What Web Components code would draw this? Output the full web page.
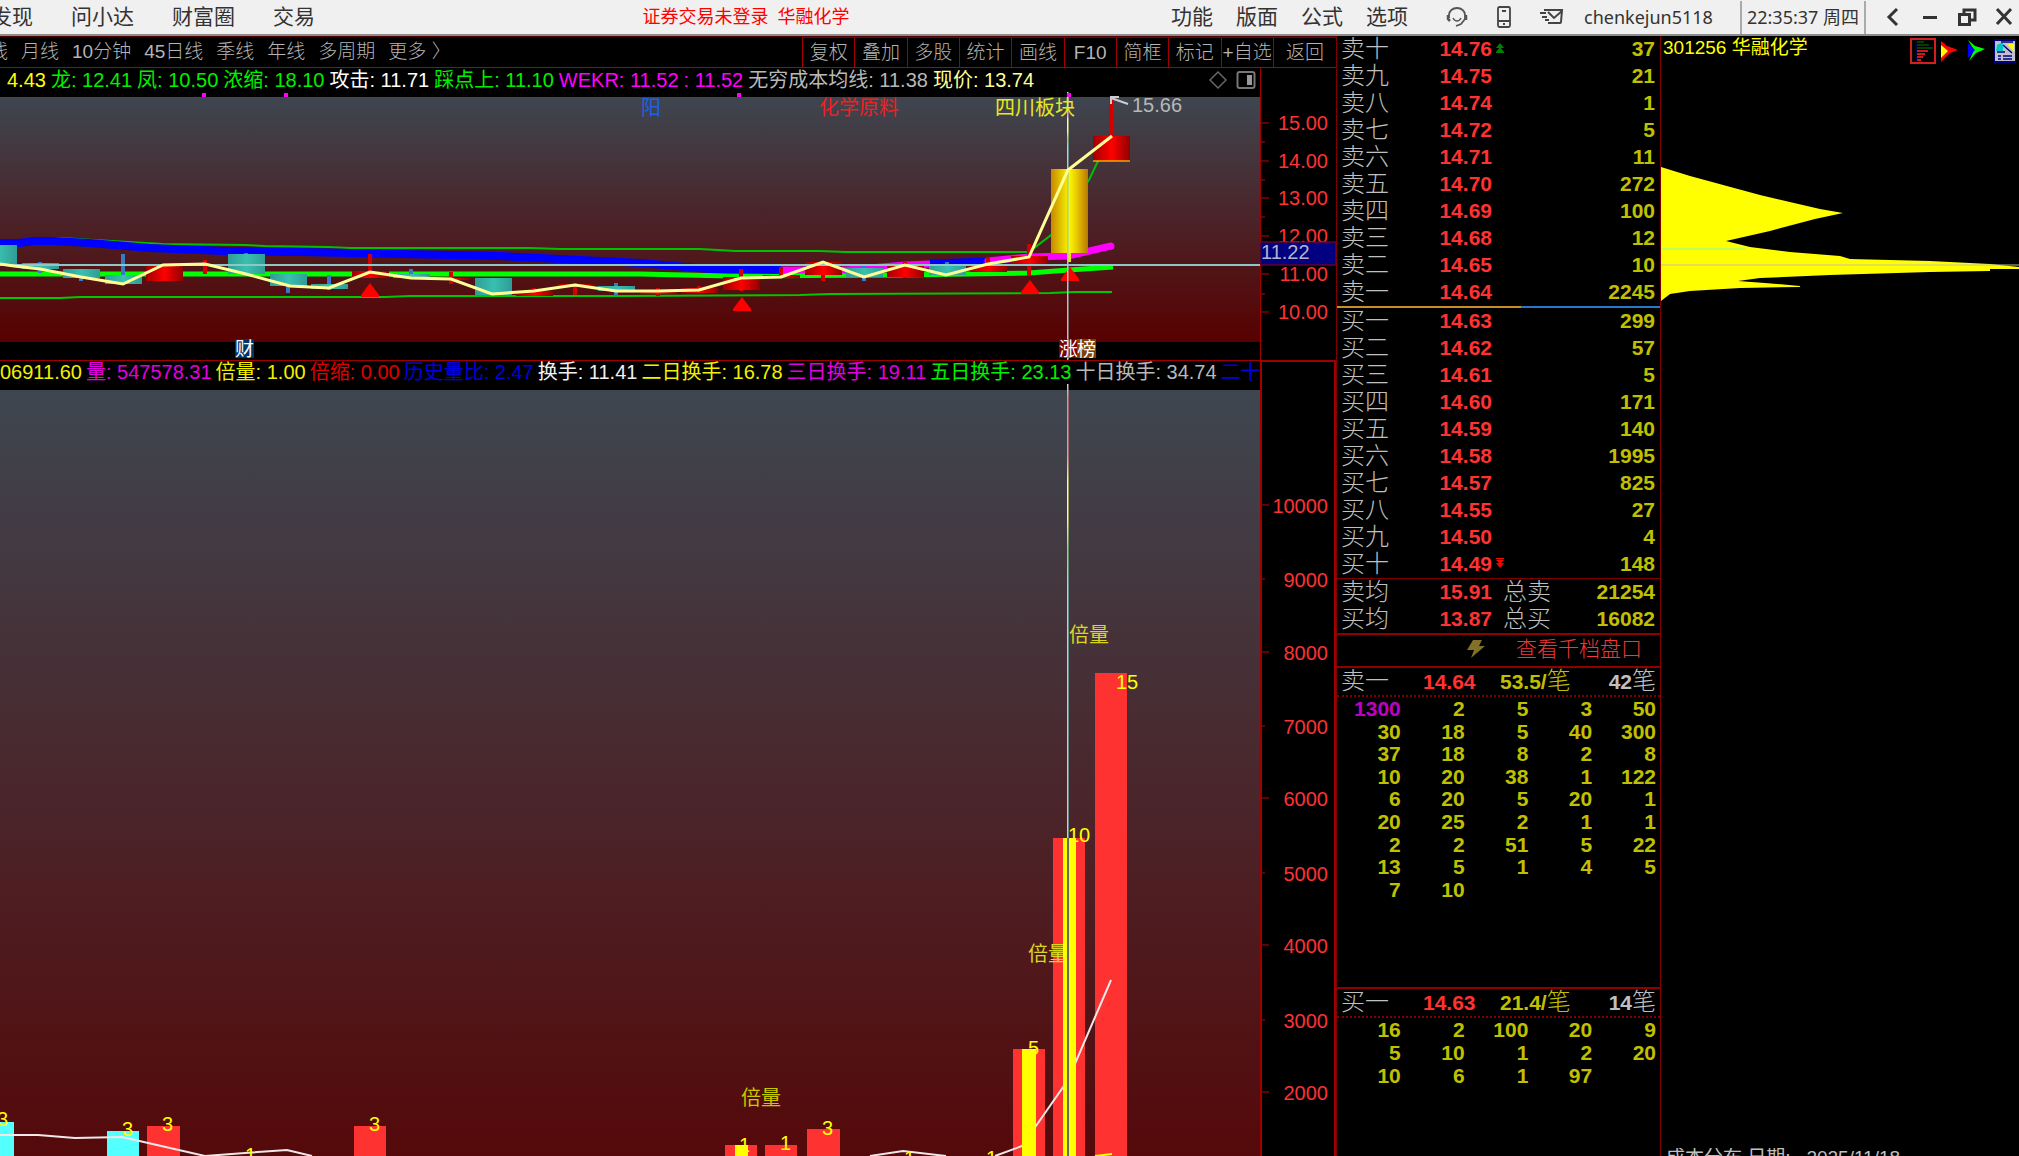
<!DOCTYPE html>
<html lang="zh-CN">
<head>
<meta charset="utf-8">
<title>301256 华融化学</title>
<style>
html,body{margin:0;height:100%;background:#000;overflow:hidden}
body{font-family:"Liberation Sans","Noto Sans CJK SC",sans-serif;font-weight:300}
</style>
</head>
<body>
<trade-app></trade-app>
<script>
const RESET = `
*{box-sizing:border-box}
button,a{font:inherit;color:inherit;background:none;border:0;padding:0;margin:0;text-decoration:none;cursor:pointer;white-space:nowrap}
svg{display:block}
`;
function define(name, css, html, setup) {
  customElements.define(name, class extends HTMLElement {
    connectedCallback() {
      if (this.shadowRoot) return;
      const root = this.attachShadow({mode: 'open'});
      root.innerHTML = '<style>' + RESET + css + '</style>' + (typeof html === 'function' ? html(this) : html);
      if (setup) setup(root, this);
    }
  });
}

/* ---------- title bar ---------- */
define('title-bar', `
:host{display:flex;align-items:center;height:36px;background:#f0f0f0;border-bottom:2px solid #8c8c8c;color:#333;font:400 21px/32px "Liberation Sans","Noto Sans CJK SC",sans-serif;overflow:hidden;white-space:nowrap}
nav{display:flex;align-items:center}
.left{gap:38px;margin-left:-9px;flex:7 0 0}
.notice{color:#f00;font-size:18px;display:flex;gap:9px}
.right{gap:23px;flex:6 0 0;justify-content:flex-end;padding-right:38px}
.icons{display:flex;align-items:center;gap:28px;padding-right:20px}
.user{font:400 18px/32px "Noto Sans","Noto Sans CJK SC",sans-serif;width:156px}
.time{font:400 18px/32px "Noto Sans","Noto Sans CJK SC",sans-serif;border-left:2px solid #aaa;border-right:2px solid #aaa;width:126px;text-align:center;height:33px}
.win{display:flex;align-items:center;gap:13px;padding:0 3px 0 15px}
.win button,.icons button{display:block}
`, `
<nav class="left"><a href="#">发现</a><a href="#">问小达</a><a href="#">财富圈</a><a href="#">交易</a></nav>
<div class="notice"><span>证券交易未登录</span><span>华融化学</span></div>
<nav class="right"><a href="#">功能</a><a href="#">版面</a><a href="#">公式</a><a href="#">选项</a></nav>
<div class="icons">
<button aria-label="客服"><svg width="22" height="22" viewBox="0 0 22 22" fill="none" stroke="#555" stroke-width="1.800"><path d="M3 12V9a8 7 0 0 1 16 0v4l-4 5-5 2"/><path d="M2 9v4l2 2M20 9v5" stroke-width="2.500"/><path d="M7 12c2 4 6 4 8 0" stroke-width="1.500"/></svg></button>
<button aria-label="手机"><svg width="16" height="22" viewBox="0 0 16 22" fill="none" stroke="#444" stroke-width="1.800"><rect x="2" y="1" width="12" height="20" rx="1.500"/><path d="M2 15h12M6 5h4"/><path d="M7 18h2"/></svg></button>
<button aria-label="消息"><svg width="24" height="20" viewBox="0 0 24 20" fill="none" stroke="#444" stroke-width="2"><path d="M4 3h18l-1 12q0 1-1 1H8M0 6h6M2 10h5M5 13h4"/><path d="M8 5l6 6 8-7"/></svg></button>
</div>
<span class="user">chenkejun5118</span>
<time class="time">22:35:37 周四</time>
<div class="win">
<button aria-label="后退"><svg width="24" height="24" viewBox="0 0 24 24" fill="none" stroke="#333" stroke-width="3"><path d="M16 4l-8 8 8 8"/></svg></button>
<button aria-label="最小化"><svg width="24" height="24" viewBox="0 0 24 24"><path d="M5 11h14v3H5z" fill="#333"/></svg></button>
<button aria-label="还原"><svg width="24" height="24" viewBox="0 0 24 24" fill="none" stroke="#333" stroke-width="3"><path d="M9 8V5h11v10h-4"/><rect x="4.500" y="9.500" width="10" height="10"/></svg></button>
<button aria-label="关闭"><svg width="24" height="24" viewBox="0 0 24 24" fill="none" stroke="#333" stroke-width="3"><path d="M5 4l14 15M19 4L5 19"/></svg></button>
</div>`);

/* ---------- period and tool bar ---------- */
define('period-bar', `
:host{display:flex;height:32px;border-top:1px solid #500;border-bottom:1px solid #b00000;color:#b4b4b4;font-size:19px;line-height:29px;overflow:hidden;white-space:nowrap}
nav{display:flex;gap:13px;flex:1;margin-left:-30px}
.tools{display:flex;width:534px;border-top:1px solid #800000;line-height:28px}
.tools button{flex:52 0 0;border-left:1px solid #a00000;text-align:center;overflow:hidden}
.tools button:last-child{flex-grow:63}
`, () => {
  const p = ['周线','月线','10分钟','45日线','季线','年线','多周期','更多 〉'];
  const t = ['复权','叠加','多股','统计','画线','F10','简框','标记','+自选','返回'];
  return '<nav>' + p.map(x => `<a href="#">${x}</a>`).join('') + '</nav><div class="tools">' + t.map(x => `<button>${x}</button>`).join('') + '</div>';
});

/* ---------- indicator read-outs ---------- */
define('indicator-row', `
:host{display:flex;align-items:center;overflow:hidden;white-space:nowrap;font-size:20px;line-height:23px;font-weight:400}
.items{display:flex;flex:1;min-width:0;overflow:hidden;gap:var(--gap,4px);padding-left:var(--inset,0)}
.items span{flex:none}
`, el => {
  const items = el.getAttribute('items').split('|').map(s => s.split('='));
  return '<div class="items">' + items.map(([t, c]) => `<span style="color:${c}">${t}</span>`).join('') + '</div><slot></slot>';
});

/* ---------- charts ---------- */
const pts = a => a.map(p => p.join(',')).join(' ');
const line = (a, c, w) => `<polyline points="${pts(a)}" fill="none" stroke="${c}" stroke-width="${w}"/>`;
const label = (x, y, t, c, extra = '') => `<text x="${x}" y="${y}" fill="${c}" ${extra}>${t}</text>`;
const CHART_CSS = `:host{display:block;overflow:hidden;min-height:0}svg{width:100%;height:100%}text{font-size:20px;font-weight:400}`;

/* x, body top, body bottom, wick top, wick bottom, kind */
const candles = [
 [-2,245,265,245,265,'t'],[40,263,269,262,273,'t'],[81,269,278,269,281,'t'],[123,275,284,254,285,'t'],[164,266,281,266,281,'r'],
 [205,264,266,260,274,'r'],[246,254,274,253,274,'t'],[288,274,286,274,293,'t'],[329,284,289,275,290,'t'],[370,271,278,254,278,'r'],
 [411,274,278,269,278,'t'],[451,278,280,272,284,'r'],[493,278,295,278,295,'t'],[534,291,296,288,296,'r'],[575,284,287,283,295,'r'],
 [616,286,291,283,296,'t'],[658,292,294,288,296,'r'],[699,288,293,286,293,'r'],[741,277,290,269,291,'r'],[781,275,278,267,278,'r'],
 [823,262,275,262,281,'r'],[864,268,277,266,281,'t'],[905,266,277,262,278,'r'],[947,265,275,262,275,'t'],[988,265,272,257,272,'r'],
 [1029,256,264,244,276,'r'],[1069,169,253,169,262,'y'],[1111,136,161,97,161,'r']];
const closeLine = [[0,264],[14,266],[40,269],[81,277],[123,284],[163,265],[205,264],[246,274],[290,286],[329,288],[370,272],[411,278],[451,279],[492,294],[534,291],[575,285],[616,291],[658,291],[699,290],[741,278],[781,277],[823,262],[864,277],[905,265],[946,275],[988,264],[1029,257],[1068,170],[1112,136]];
const wick = {t:'#3a78c8', r:'#d40000', y:'#f0e000'};

define('price-chart', CHART_CSS, () => {
  let s = `<svg viewBox="0 92 1260 268" preserveAspectRatio="xMaxYMin slice"><defs>
<linearGradient id="bg" x1="0" y1="0" x2="0" y2="1"><stop offset="0" stop-color="#3e4650"/><stop offset="1" stop-color="#580000"/></linearGradient>
<linearGradient id="r"><stop offset="0" stop-color="#a00000"/><stop offset=".5" stop-color="#f00"/><stop offset="1" stop-color="#900000"/></linearGradient>
<linearGradient id="t"><stop offset="0" stop-color="#309c96"/><stop offset=".5" stop-color="#38c0b0"/><stop offset="1" stop-color="#309c96"/></linearGradient>
<linearGradient id="y"><stop offset="0" stop-color="#c88800"/><stop offset=".5" stop-color="#f8f800"/><stop offset=".7" stop-color="#e8c800"/><stop offset="1" stop-color="#b87800"/></linearGradient>
<linearGradient id="v" x1="0" y1="92" x2="0" y2="170" gradientUnits="userSpaceOnUse"><stop offset="0" stop-color="#ddd"/><stop offset=".3" stop-color="#ff90d0"/><stop offset=".35" stop-color="#ffff90"/><stop offset=".5" stop-color="#ffff90"/><stop offset=".6" stop-color="#80e080"/><stop offset=".75" stop-color="#88e8f0"/><stop offset="1" stop-color="#9ccccc"/></linearGradient>
</defs><rect x="0" y="92" width="1260" height="268"/><rect x="0" y="97" width="1260" height="245" fill="url(#bg)"/>`;
  s += line([[0,240],[25,240],[60,238],[163,244],[245,245],[265,246],[328,247],[350,248],[530,248],[560,249],[700,249],[735,251],[820,251],[845,252],[1029,252],[1051,235],[1089,180],[1098,161],[1111,150]],'#00c000',2);
  s += line([[0,298],[60,298],[80,297],[385,297],[410,296],[620,296],[800,295],[830,294],[1050,293],[1075,292],[1112,292]],'#00c800',2);
  s += line([[0,274],[640,274],[730,276],[900,275],[1029,273],[1069,270],[1113,267]],'#0f0',5);
  s += line([[0,243],[19,243],[35,241],[53,241],[90,243],[150,248],[225,251],[300,252],[400,254],[500,256],[560,259],[640,263],[710,269],[781,270]],'#00f',8);
  s += line([[781,270],[846,270],[905,265],[930,264]],'#f0f',7) + line([[930,263],[988,261]],'#00f',7);
  s += `<polyline points="988,261 1029,257 1068,256 1111,246" fill="none" stroke="#f0f" stroke-width="7" stroke-linecap="round"/>`;
  for (const [x, a, b, c, d, k] of candles) {
    s += `<rect x="${x-2}" y="${c}" width="4" height="${d-c}" fill="${wick[k]}"/><rect x="${x-18}" y="${a}" width="37" height="${b-a}" fill="url(#${k})"/>`;
  }
  s += '<path d="M1093 161h37" stroke="#ff0" stroke-width="1"/>';
  for (const [x, y] of [[370,283],[742,297],[1030,280],[1070,267]]) s += `<path d="M${x} ${y}l9 12v2h-18v-2z" fill="#f00"/>`;
  s += `<path d="M0 265h1260" stroke="#8cc8c8" stroke-width="2"/><path d="M1067 92h1.500v268h-1.500z" fill="url(#v)"/>`;
  s += line(closeLine,'#ffff96',3);
  for (const x of [204,286,739,1069]) s += `<rect x="${x-2}" y="93" width="4" height="4" fill="#f0f"/>`;
  s += label(641,115,'阳','#2060e8') + label(819,115,'化学原料','#f02020') + label(995,115,'四川板块','#e8e820') + label(1132,112,'15.66','#b8b8b8');
  s += `<path d="M1128 104l-17-6m0 6v-7h8" stroke="#ccc" stroke-width="2" fill="none"/>`;
  for (const [x, c, t] of [[235,'#003468','财'],[1059,'#780000','涨'],[1077,'#804000','榜']]) s += `<rect x="${x}" y="339" width="19" height="19" fill="${c}"/><text x="${x}" y="356" fill="#fff" style="font-size:19px">${t}</text>`;
  return s + '<path d="M1068 339v20" stroke="#ccc"/></svg>';
});

define('volume-chart', CHART_CSS, () => {
  let s = `<svg viewBox="0 384 1260 772" preserveAspectRatio="xMaxYMin slice"><defs>
<linearGradient id="bg" x1="0" y1="390" x2="0" y2="1265" gradientUnits="userSpaceOnUse"><stop offset="0" stop-color="#3e4650"/><stop offset="1" stop-color="#580000"/></linearGradient>
<linearGradient id="v" x1="0" y1="384" x2="0" y2="640" gradientUnits="userSpaceOnUse"><stop offset="0" stop-color="#ccc"/><stop offset=".06" stop-color="#ff8080"/><stop offset=".28" stop-color="#ff9090"/><stop offset=".38" stop-color="#ffff80"/><stop offset=".52" stop-color="#ffff80"/><stop offset=".65" stop-color="#80e080"/><stop offset=".8" stop-color="#88e8e8"/><stop offset="1" stop-color="#88e8e8"/></linearGradient>
</defs><rect y="384" width="1260" height="772"/><rect y="390" width="1260" height="766" fill="url(#bg)"/>`;
  const red = '#ff3232', cy = '#54ffff';
  const bars = [[-18,32,1122,cy],[107,32,1131,cy],[147,33,1126,red],[354,32,1126,red],[725,32,1145,red],[765,32,1145,red],[807,33,1129,red],[1013,32,1049,red],[1053,32,838,red],[1095,32,673,red]];
  for (const [x, w, y, c] of bars) s += `<rect x="${x}" y="${y}" width="${w}" height="${1156-y}" fill="${c}"/>`;
  s += line([[0,1135],[38,1135],[75,1138],[122,1137],[205,1156],[245,1153],[287,1150],[312,1156]],'#f0e8e8',2);
  s += line([[870,1156],[903,1151],[946,1156]],'#f0e8e8',2) + line([[995,1156],[1022,1146],[1068,1080],[1111,980]],'#f0e8e8',2) + line([[1095,1156],[1112,1154]],'#ff0',2);
  s += label(741,1105,'倍量','#c8c800') + label(1069,642,'倍量','#d8d820') + label(1028,961,'倍量','#d8d820');
  s += `<path d="M735 1145h13v11h-13zM1022 1049h14v107h-14zM1063 838h13v318h-13z" fill="#ff0"/>`;
  s += `<path d="M1067 384h1.500v454h-1.500z" fill="url(#v)"/><path d="M1068 838v318" stroke="#666" stroke-width="2"/>`;
  for (const [x, y, t] of [[-3,1126,'3'],[122,1136,'3'],[162,1131,'3'],[245,1162,'1'],[369,1131,'3'],[739,1152,'1'],[780,1150,'1'],[822,1135,'3'],[904,1165,'1'],[986,1165,'1'],[1028,1055,'5'],[1068,842,'10'],[1116,689,'15']]) s += label(x, y, t, '#ff0');
  return s + '</svg>';
});

const AXIS_CSS = CHART_CSS + `text{fill:#ff3232;text-anchor:end}`;
define('price-axis', AXIS_CSS, () => {
  let s = `<svg viewBox="1260 68 76 292" preserveAspectRatio="xMinYMin slice"><rect x="1260" y="68" width="76" height="292"/><path d="M1260 68v292" stroke="#a00000" stroke-width="2"/>`;
  for (const [y, t] of [[123,'15.00'],[161,'14.00'],[198,'13.00'],[236,'12.00'],[274,'11.00'],[312,'10.00']]) s += `<path d="M1261 ${y}h8" stroke="#c00000"/>` + `<text x="1328" y="${y+7}">${t}</text>`;
  for (const y of [142,180,217,294]) s += `<path d="M1261 ${y}h4" stroke="#c00000"/>`;
  return s + `<rect x="1260" y="242" width="76" height="23" fill="#000080" stroke="#a00000"/><text x="1261" y="259" style="text-anchor:start;fill:#b4b4c8">11.22</text></svg>`;
});
define('volume-axis', AXIS_CSS, () => {
  let s = `<svg viewBox="1260 360 76 796" preserveAspectRatio="xMinYMin slice"><rect x="1260" y="360" width="76" height="796"/><path d="M1261 1156V361h74v795" stroke="#a00000" stroke-width="2" fill="none"/>`;
  [[506,'10000'],[580,'9000'],[653,'8000'],[727,'7000'],[799,'6000'],[874,'5000'],[946,'4000'],[1021,'3000'],[1093,'2000']].forEach(([y, t], i) => {
    s += `<path d="M1262 ${y-1}h${i % 2 ? 3 : 7}" stroke="#c00000" stroke-width="1"/><text x="1328" y="${y+7}">${t}</text>`;
  });
  return s + '</svg>';
});

/* ---------- order book ---------- */
define('order-book', `
:host{display:block;flex:none}
table{border-collapse:collapse;width:100%;table-layout:fixed}
tr{height:27px}
th,td{padding:0;line-height:25px;white-space:nowrap;vertical-align:top}
th{width:100px;text-align:left;padding-left:4px;font-weight:300;font-size:24px;color:#c0c0c0}
.price{width:55px;text-align:right;color:#ff3232;font-weight:700;font-size:21px}
.mark svg{margin:7px 0 0 4px}
.vol{text-align:right;padding-right:5px;color:#c0c000;font-weight:700;font-size:21px;width:90px}
.tot{font-size:24px;color:#c0c0c0;padding-left:11px}
.split{height:2px;background:linear-gradient(90deg,#c88c28 57%,#2878c8 57%)}
.sum{border-top:1px solid #800000}
`, () => {
  const asks = [['十','14.76',37],['九','14.75',21],['八','14.74',1],['七','14.72',5],['六','14.71',11],['五','14.70',272],['四','14.69',100],['三','14.68',12],['二','14.65',10],['一','14.64',2245]];
  const bids = [['一','14.63',299],['二','14.62',57],['三','14.61',5],['四','14.60',171],['五','14.59',140],['六','14.58',1995],['七','14.57',825],['八','14.55',27],['九','14.50',4],['十','14.49',148]];
  const up = '<svg width="8" height="11" viewBox="0 0 8 11" fill="#008000"><path d="M4 0l4 5H0zM4 4l4 5H0zM0 9h8v1H0z"/></svg>';
  const down = '<svg width="8" height="11" viewBox="0 0 8 11" fill="#f00"><path d="M0 0h8v1H0zM0 2h8L4 6zM0 5h8l-4 5z"/></svg>';
  const rows = (side, a, at, mark) => a.map(([n, p, v], i) => `<tr><th scope="row">${side}${n}</th><td class="price">${p}</td><td class="mark">${i === at ? mark : ''}</td><td class="vol">${v}</td></tr>`).join('');
  return `<table>${rows('卖', asks, 0, up)}</table><div class="split"></div><table>${rows('买', bids, 9, down)}</table>
<div class="sum"><table><tr><th scope="row">卖均</th><td class="price">15.91</td><td class="tot">总卖</td><td class="vol">21254</td></tr><tr><th scope="row">买均</th><td class="price">13.87</td><td class="tot">总买</td><td class="vol">16082</td></tr></table></div>`;
});

/* ---------- queue at best price ---------- */
define('queue-panel', `
:host{display:block;flex:none;border-top:2px solid #900000}
header{display:flex;height:29px;line-height:25px;font-size:24px;color:#c0c0c0;padding:0 4px;border-bottom:2px dotted #800000;white-space:nowrap}
b{font-size:21px;font-weight:700}
.n{width:82px}.p{color:#ff3232;width:77px}.a{color:#c0c000;flex:1}.c{text-align:right}
table{border-collapse:collapse;width:319px;table-layout:fixed;margin-top:1px}
td{padding:0;text-align:right;font:700 21px/22px "Liberation Sans",sans-serif;color:#c0c000}
td.big{color:#c000c0}
`, el => {
  const [n, p, a, c] = el.getAttribute('head').split(',');
  const rows = el.getAttribute('rows').split('|').map(r => r.split(' '));
  const h = Math.round(rows.length * 45 / 2);
  return `<header><span class="n">${n}</span><span class="p"><b>${p}</b></span><span class="a"><b>${a}/</b>笔</span><span class="c"><b>${c}</b>笔</span></header>
<table style="height:${h}px">${rows.map(r => '<tr>' + [0,1,2,3,4].map(i => `<td${r[i] > 999 ? ' class="big"' : ''}>${r[i] || ''}</td>`).join('') + '</tr>').join('')}</table>`;
});

/* ---------- cost distribution ---------- */
define('cost-panel', `
:host{display:flex;flex-direction:column;background:#000;overflow:hidden;color:#ff0;font-size:19px;font-weight:400}
header{display:flex;align-items:center;height:28px;padding:0 3px 0 2px;white-space:nowrap}
h1{font:inherit;margin:0;flex:1;line-height:22px;padding-bottom:4px}
.tools{display:flex;align-items:center;gap:4px;padding-top:2px}
.plot{flex:1;min-height:0;overflow:hidden}
.plot>svg{width:100%;height:100%}
footer{height:8px;overflow:hidden;color:#c0c0c0;font-size:19px;line-height:20px;padding-left:5px;white-space:pre}
`, `
<header><h1>301256 华融化学</h1><div class="tools">
<button aria-label="筹码分布"><svg width="26" height="26" viewBox="0 0 26 26" fill="none"><rect x="1" y="1" width="24" height="24" stroke="#d02020" stroke-width="2"/><path d="M6 4v20" stroke="#000080"/><path d="M7 4h7M7 7h12M7 10h16" stroke="#008000"/><path d="M7 13h11M7 16h8M7 19h6M7 22h4" stroke="#d01818" stroke-width="2"/></svg></button>
<button aria-label="红箭头"><svg width="23" height="24" viewBox="0 0 23 24"><path d="M1 2l6 5 11 4-8 3-9 9z" fill="#f00"/><path d="M1 6l7 6-7 7z" fill="#ff0"/></svg></button>
<button aria-label="绿箭头"><svg width="23" height="24" viewBox="0 0 23 24"><path d="M1 1l7 6 10 3-9 4-7 8 5-11z" fill="#0f0"/><path d="M1 4l7 7-7 8z" fill="#00f"/></svg></button>
<button aria-label="资料"><svg width="22" height="24" viewBox="0 0 22 24"><path d="M0 1h22v22H0z" fill="#c0c0c8" stroke="#000080" stroke-width="2"/><path d="M3 6l6-3v9H2z" fill="#00c8c8"/><path d="M13 5h7v8z" fill="#ff0"/><path d="M7 3h12M9 6l9 8M3 13h8M4 17h3M9 17h9M4 20h3M9 20h9" stroke="#000080" stroke-width="1.500"/></svg></button>
</div></header>
<div class="plot"><svg viewBox="1661 64 358 1084" preserveAspectRatio="xMinYMin slice"><path fill="#ff0" d="M1661 167L1690 176L1760 195L1820 209L1843 213L1815 219L1770 231L1726 241L1750 247L1790 252L1840 256L1850 259L1930 261L1990 264L2019 267V269H1990V271L1930 272L1830 275L1760 278L1738 281L1765 283L1800 286L1800 287L1740 288L1690 291L1670 294L1661 301Z"/><path d="M1661 249h85" stroke="#80ffb0"/><path d="M1661 265h358" stroke="#c0c0a0"/></svg></div>
<footer>成本分布,日期:   2025/11/18</footer>`);

/* ---------- page ---------- */
define('trade-app', `
:host{display:grid;grid-template:36px minmax(0,1fr)/minmax(0,1fr) 325px 358px;height:100vh;background:#000}
title-bar{grid-column:1/-1}
.main{display:grid;grid-template:32px 24px 268px 24px minmax(0,1fr)/minmax(0,1fr) 76px;min-width:0}
period-bar{grid-column:1/-1}
price-axis{grid-column:2;grid-row:2/4}
volume-axis{grid-column:2;grid-row:4/6}
.row1{grid-column:1;grid-row:2;--inset:7px;--gap:5px}
.row2{grid-column:1;grid-row:4;border-top:1px solid #a00000;--gap:4px}
price-chart{grid-column:1;grid-row:3}
volume-chart{grid-column:1;grid-row:5}
.ico{display:flex;gap:8px;padding-right:4px}
.side{border-left:1px solid #800000;border-right:1px solid #800000;display:flex;flex-direction:column}
.deep{display:flex;align-items:center;justify-content:flex-end;gap:30px;height:33px;border-top:2px solid #900000;color:#f03838;font-size:21px;line-height:26px;padding:0 18px 4px 0;flex:none}
.ask{height:321px}
`, `
<title-bar></title-bar>
<div class="main">
<period-bar></period-bar>
<indicator-row class="row1" items="4.43=#ff0|龙: 12.41=#00f000|凤: 10.50=#00f000|浓缩: 18.10=#00f000|攻击: 11.71=#fff|踩点上: 11.10=#00f000|WEKR: 11.52=#f0f|: 11.52=#f0f|无穷成本均线: 11.38=#b8b8b8|现价: 13.74=#ffff96">
<div class="ico"><svg width="20" height="20" viewBox="0 0 20 20" fill="none" stroke="#666" stroke-width="1.500"><path d="M10 2l8 8-8 8-8-8z"/></svg><svg width="20" height="20" viewBox="0 0 20 20"><rect x="1.500" y="2" width="17" height="16" rx="2" fill="none" stroke="#777" stroke-width="2"/><path d="M11 5h5v10h-5z" fill="#999"/></svg></div>
</indicator-row>
<price-chart></price-chart>
<price-axis></price-axis>
<indicator-row class="row2" items="06911.60=#f0f000|量: 547578.31=#e000e0|倍量: 1.00=#f0f000|倍缩: 0.00=#e00000|历史量比: 2.47=#0000e0|换手: 11.41=#f0f0f0|二日换手: 16.78=#f0f000|三日换手: 19.11=#e000e0|五日换手: 23.13=#00f000|十日换手: 34.74=#b8b8b8|二十=#0000e0"></indicator-row>
<volume-chart></volume-chart>
<volume-axis></volume-axis>
</div>
<div class="side">
<order-book></order-book>
<button class="deep"><svg width="20" height="20" viewBox="0 0 20 20"><path d="M7 1h9l-3 6h6L5 19l3-8H1z" fill="#807028"/></svg><span>查看千档盘口</span></button>
<queue-panel class="ask" head="卖一,14.64,53.5,42" rows="1300 2 5 3 50|30 18 5 40 300|37 18 8 2 8|10 20 38 1 122|6 20 5 20 1|20 25 2 1 1|2 2 51 5 22|13 5 1 4 5|7 10"></queue-panel>
<queue-panel head="买一,14.63,21.4,14" rows="16 2 100 20 9|5 10 1 2 20|10 6 1 97"></queue-panel>
</div>
<cost-panel></cost-panel>`);
</script>
</body>
</html>
